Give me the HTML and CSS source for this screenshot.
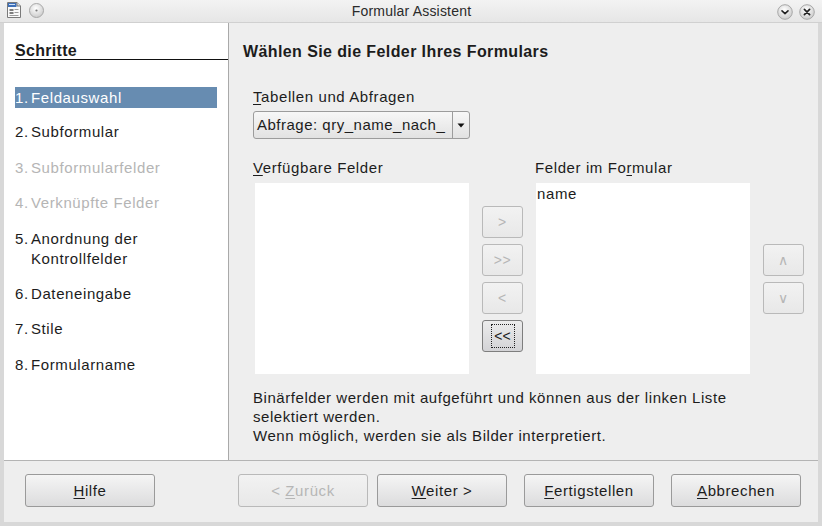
FILE: index.html
```html
<!DOCTYPE html>
<html lang="de">
<head>
<meta charset="utf-8">
<title>Formular Assistent</title>
<link rel="stylesheet" href="styles.css">
</head>
<body>
<div class="window">
  <header class="titlebar">
    <div class="tb-left">
      <svg class="app-icon" width="14" height="16" viewBox="0 0 14 16">
        <path d="M0.5 0.5 H10 L13.5 4 V15.5 H0.5 Z" fill="#fafafa" stroke="#7a7a7a"/>
        <rect x="1" y="1" width="8.5" height="4" fill="#3d6fb8"/>
        <rect x="2" y="2" width="6" height="1" fill="#cfe0f5"/>
        <path d="M10 0.5 V4 H13.5" fill="#e0e0e0" stroke="#7a7a7a"/>
        <rect x="2.5" y="7" width="4" height="2" fill="#7d7d7d"/>
        <rect x="7.5" y="7" width="4" height="1" fill="#9a9a9a"/>
        <rect x="2.5" y="10" width="4" height="2" fill="#7d7d7d"/>
        <rect x="7.5" y="10" width="4" height="1" fill="#9a9a9a"/>
        <rect x="2.5" y="13" width="9" height="1" fill="#9a9a9a"/>
      </svg>
      <svg class="round-btn" width="15" height="15" viewBox="0 0 15 15">
        <defs>
          <radialGradient id="rg1" cx="0.45" cy="0.35" r="0.7">
            <stop offset="0" stop-color="#ffffff"/>
            <stop offset="1" stop-color="#c8c8c8"/>
          </radialGradient>
        </defs>
        <circle cx="7.5" cy="7.5" r="7" fill="url(#rg1)" stroke="#a8a8a8"/>
        <circle cx="7.5" cy="7.5" r="1.1" fill="#7a7a7a"/>
      </svg>
    </div>
    <div class="tb-title">Formular Assistent</div>
    <div class="tb-right">
      <svg class="round-btn" width="16" height="16" viewBox="0 0 16 16">
        <defs>
          <radialGradient id="rg2" cx="0.45" cy="0.35" r="0.7">
            <stop offset="0" stop-color="#ffffff"/>
            <stop offset="1" stop-color="#c8c8c8"/>
          </radialGradient>
        </defs>
        <circle cx="8" cy="8" r="7.3" fill="url(#rg2)" stroke="#a8a8a8"/>
        <path d="M5 6.8 L8 9.6 L11 6.8" fill="none" stroke="#222" stroke-width="1.6" stroke-linecap="round" stroke-linejoin="round"/>
      </svg>
      <svg class="round-btn" width="16" height="16" viewBox="0 0 16 16">
        <circle cx="8" cy="8" r="7.3" fill="url(#rg2)" stroke="#a8a8a8"/>
        <path d="M5.4 5.4 L10.6 10.6 M10.6 5.4 L5.4 10.6" fill="none" stroke="#222" stroke-width="1.7" stroke-linecap="round"/>
      </svg>
    </div>
  </header>

  <div class="main">
    <aside class="steps">
      <div class="steps-title">Schritte</div>
      <ol class="step-list">
        <li class="step active"><span class="num">1.</span><span>Feldauswahl</span></li>
        <li class="step"><span class="num">2.</span><span>Subformular</span></li>
        <li class="step disabled"><span class="num">3.</span><span>Subformularfelder</span></li>
        <li class="step disabled"><span class="num">4.</span><span>Verknüpfte Felder</span></li>
        <li class="step"><span class="num">5.</span><span>Anordnung der<br>Kontrollfelder</span></li>
        <li class="step"><span class="num">6.</span><span>Dateneingabe</span></li>
        <li class="step"><span class="num">7.</span><span>Stile</span></li>
        <li class="step"><span class="num">8.</span><span>Formularname</span></li>
      </ol>
    </aside>

    <section class="page">
      <h1 class="page-title">Wählen Sie die Felder Ihres Formulars</h1>
      <div class="form">
        <label class="label"><u>T</u>abellen und Abfragen</label>
        <div class="combo">
          <span class="combo-text">Abfrage: qry_name_nach_</span>
          <span class="combo-arrow"><svg width="8" height="5" viewBox="0 0 8 5"><path d="M0.5 0.5 H7.5 L4 4.5 Z" fill="#111"/></svg></span>
        </div>

        <div class="fields">
          <label class="label col-left"><u>V</u>erfügbare Felder</label>
          <label class="label col-right">Felder im Fo<u>r</u>mular</label>
          <div class="listbox list-left"></div>
          <div class="move-btns">
            <button class="btn small" disabled>&gt;</button>
            <button class="btn small" disabled>&gt;&gt;</button>
            <button class="btn small" disabled>&lt;</button>
            <button class="btn small focus"><span class="focus-ring">&lt;&lt;</span></button>
          </div>
          <div class="listbox list-right"><div class="list-item">name</div></div>
          <div class="order-btns">
            <button class="btn small" disabled>&#x2227;</button>
            <button class="btn small" disabled>&#x2228;</button>
          </div>
        </div>

        <p class="note">Binärfelder werden mit aufgeführt und können aus der linken Liste selektiert werden.<br>Wenn möglich, werden sie als Bilder interpretiert.</p>
      </div>
    </section>
  </div>

  <footer class="footer">
    <button class="btn wide"><span><u>H</u>ilfe</span></button>
    <button class="btn wide back" disabled><span>&lt; <u>Z</u>urück</span></button>
    <button class="btn wide next"><span><u>W</u>eiter &gt;</span></button>
    <button class="btn wide finish"><span><u>F</u>ertigstellen</span></button>
    <button class="btn wide cancel"><span><u>A</u>bbrechen</span></button>
  </footer>
</div>
</body>
</html>
```

FILE: styles.css
```css
* {
  box-sizing: border-box;
}

html, body {
  margin: 0;
  padding: 0;
}

body {
  width: 822px;
  height: 526px;
  overflow: hidden;
  background: #d6d6d6;
  font-family: "Liberation Sans", Arial, sans-serif;
  font-size: 15px;
  color: #1c1c1c;
}

u {
  text-decoration: underline;
  text-underline-offset: 2px;
}

.window {
  width: 822px;
  height: 526px;
  display: flex;
  flex-direction: column;
  padding: 0 4px 4px 4px;
  background: #d8d8d8;
}

/* title bar */
.titlebar {
  height: 23px;
  margin: 0 -4px;
  padding: 0 6px 0 7px;
  display: flex;
  align-items: center;
  background: linear-gradient(#f3f3f3, #e6e6e6);
  border-bottom: 1px solid #d0d0d0;
}

.tb-left {
  display: flex;
  align-items: center;
  gap: 8px;
  margin-top: -2px;
}

.tb-title {
  flex: 1;
  text-align: center;
  font-size: 14px;
  color: #2a2a2a;
  letter-spacing: 0.2px;
  padding-left: 2px;
}

.tb-right {
  display: flex;
  align-items: center;
  gap: 6px;
  margin-top: 2px;
  margin-right: 1px;
}

.round-btn {
  display: block;
}

/* body of the dialog */
.main {
  flex: 1;
  display: flex;
  min-height: 0;
  background: #eeeeee;
  border-bottom: 1px solid #b4b4b4;
}

.steps {
  width: 225px;
  background: #ffffff;
  border-right: 1px solid #a9a9a9;
  padding: 20px 0 0 11px;
}

.steps-title {
  font-weight: bold;
  font-size: 16px;
  letter-spacing: 0.3px;
  border-bottom: 1px solid #111;
  line-height: 16px;
}

.step-list {
  list-style: none;
  margin: 27px 0 0 0;
  padding: 0;
  display: flex;
  flex-direction: column;
  gap: 15.4px;
}

.step {
  display: flex;
  line-height: 20px;
  letter-spacing: 0.6px;
  width: 202px;
}

.step .num {
  width: 16px;
  flex: none;
}

.step.active {
  background: #678cb1;
  color: #ffffff;
  padding-top: 1px;
  margin-bottom: -1px;
}

.step.disabled {
  color: #b5b5b5;
}

.page {
  flex: 1;
  padding: 20px 0 0 14px;
}

.page-title {
  margin: 0;
  font-size: 16px;
  font-weight: bold;
  letter-spacing: 0.4px;
  line-height: 18px;
}

.form {
  padding: 26px 0 0 10px;
}

.label {
  display: block;
  line-height: 19px;
  letter-spacing: 0.6px;
}

.combo {
  margin-top: 5px;
  width: 217px;
  height: 28px;
  display: flex;
  border: 1px solid #9c9c9c;
  border-radius: 3px;
  background: linear-gradient(#f7f7f7, #e2e2e2);
  align-items: stretch;
}

.combo-text {
  flex: 1;
  padding-left: 3px;
  line-height: 25px;
  letter-spacing: 0.5px;
  white-space: nowrap;
  overflow: hidden;
}

.combo-arrow {
  width: 17px;
  border-left: 1px solid #9c9c9c;
  display: flex;
  align-items: center;
  justify-content: center;
}

.combo-arrow svg {
  display: block;
}

.fields {
  margin-top: 19px;
  display: grid;
  grid-template-columns: 217px 66px 215px 53px;
  grid-template-rows: 19px 191px;
  row-gap: 6px;
}

.col-left {
  grid-column: 1;
  grid-row: 1;
}

.col-right {
  grid-column: 3;
  grid-row: 1;
  margin-left: -1px;
}

.listbox {
  background: #ffffff;
  grid-row: 2;
}

.list-left {
  grid-column: 1;
  margin-left: 2px;
  width: 214px;
}

.list-right {
  grid-column: 3;
  width: 214px;
}

.list-item {
  padding: 2px 0 0 1px;
  line-height: 18px;
  letter-spacing: 0.6px;
}

.move-btns,
.order-btns {
  grid-row: 2;
  display: flex;
  flex-direction: column;
  gap: 6px;
}

.move-btns {
  grid-column: 2;
  padding: 23px 0 0 12px;
}

.order-btns {
  grid-column: 4;
  padding: 61px 0 0 12px;
}

.note {
  margin: 14px 0 0 0;
  line-height: 19px;
  letter-spacing: 0.55px;
  width: 520px;
}

/* buttons */
.btn {
  font-family: "Liberation Sans", Arial, sans-serif;
  font-size: 15px;
  letter-spacing: 0.6px;
  color: #1c1c1c;
  border: 1px solid #9a9a9a;
  border-radius: 3px;
  background: linear-gradient(#f5f5f5, #dcdcdd);
  padding: 0;
  display: flex;
  align-items: center;
  justify-content: center;
}

.btn:disabled {
  color: #b6b6b6;
  border-color: #b9b9b9;
  background: linear-gradient(#f2f2f2, #e8e8e8);
}

.btn.small {
  width: 41px;
  height: 32px;
  font-size: 14px;
}

.btn.focus {
  border-color: #7e7e7e;
  background: linear-gradient(#ececec, #d3d3d6);
}

.focus-ring {
  display: block;
  width: 24px;
  height: 24px;
  border: 1px dotted #222;
  line-height: 22px;
  text-align: center;
  letter-spacing: 0;
}

.footer {
  height: 61px;
  background: #eeeeee;
  display: flex;
  align-items: flex-start;
  padding: 13px 0 0 21px;
}

.btn.wide {
  width: 130px;
  height: 33px;
}

.back {
  margin-left: 83px;
}

.next {
  margin-left: 9px;
}

.finish,
.cancel {
  margin-left: 17px;
}
```
